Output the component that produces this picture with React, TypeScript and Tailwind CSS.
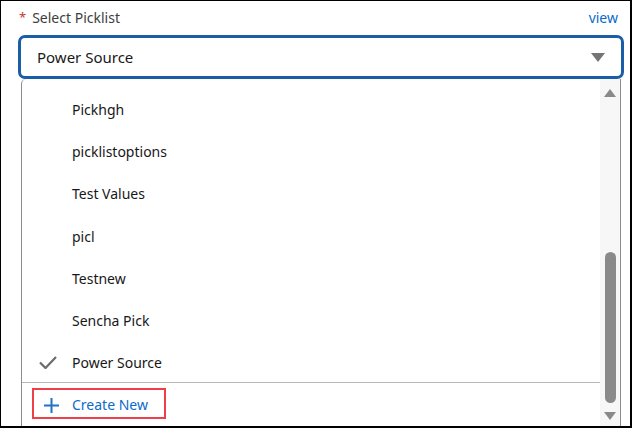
import React from "react";

// picklist values shown in the open dropdown
const options = [
  "Pickhgh",
  "picklistoptions",
  "Test Values",
  "picl",
  "Testnew",
  "Sencha Pick",
  "Power Source",
];

const selected = "Power Source";

export default function App() {
  return (
    <div
      className="w-[632px] h-[428px] overflow-hidden bg-white border-black border-t border-l border-r-2 border-b-2 text-[#181818]"
      style={{ fontFamily: '"Segoe UI", "Noto Sans", "Open Sans", sans-serif' }}
    >
      {/* label row */}
      <div className="flex items-center justify-between pl-[18px] pr-[12px] pt-[5px] h-[28px]">
        <div className="flex items-center text-[14px] text-[#3e3e3c]">
          <span className="text-[#c23934] mr-[6px] text-[13px]">*</span>
          Select Picklist
        </div>
        <span className="text-[14px] text-[#0b6bcb]">view</span>
      </div>

      {/* combobox */}
      <div className="ml-[17px] mr-[6px] mt-[6px] h-[44px] border-[3px] border-[#1b5ea8] rounded-[7px] flex items-center justify-between pl-[16px] pr-[16px]">
        <span className="text-[15px]">Power Source</span>
        <svg width="14" height="9" viewBox="0 0 14 9">
          <path d="M0 0 H14 L7 9 Z" fill="#757575" />
        </svg>
      </div>

      {/* dropdown */}
      <div className="ml-[20px] mr-[9px] h-[360px] border-l border-r border-[#8c8c8c] rounded-tl-[5px] flex">
        <div className="flex-1 flex flex-col">
          <ul className="pt-[9px]">
            {options.map((o) => (
              <li key={o} className="h-[42.3px] flex items-center text-[14px]">
                <span className="w-[50px] flex justify-center pl-[2px]">
                  {o === selected && (
                    <svg width="18" height="13" viewBox="0 0 18 13">
                      <path d="M1 6.5 L6.5 12 L17 1" fill="none" stroke="#6b6b6b" strokeWidth="2.2" />
                    </svg>
                  )}
                </span>
                <span>{o}</span>
              </li>
            ))}
          </ul>
          <div className="mt-[-2px] border-t border-[#b8b8b8] pt-[5px] pl-[10px]">
            <button className="h-[31px] w-[134px] border-2 border-[#ee4048] flex items-center pl-[9px] pt-[2px] gap-[12px] text-[14px] text-[#0b6bcb]">
              <svg width="17" height="17" viewBox="0 0 17 17" className="mt-[2px]">
                <path d="M8.5 1 V16 M1 8.5 H16" stroke="#1f72c8" strokeWidth="2" />
              </svg>
              Create New
            </button>
          </div>
        </div>

        {/* scrollbar */}
        <div className="w-[20px] bg-[#f7f7f7] flex flex-col items-center pt-[10px]">
          <svg width="12" height="8" viewBox="0 0 12 8">
            <path d="M0 8 L6 0 L12 8 Z" fill="#8a8a8a" />
          </svg>
          <div className="h-[155px]" />
          <div className="w-[11px] h-[151px] rounded-full bg-[#8a8a8a]" />
          <div className="h-[9px]" />
          <svg width="12" height="8" viewBox="0 0 12 8">
            <path d="M0 0 H12 L6 8 Z" fill="#8a8a8a" />
          </svg>
        </div>
      </div>
    </div>
  );
}
